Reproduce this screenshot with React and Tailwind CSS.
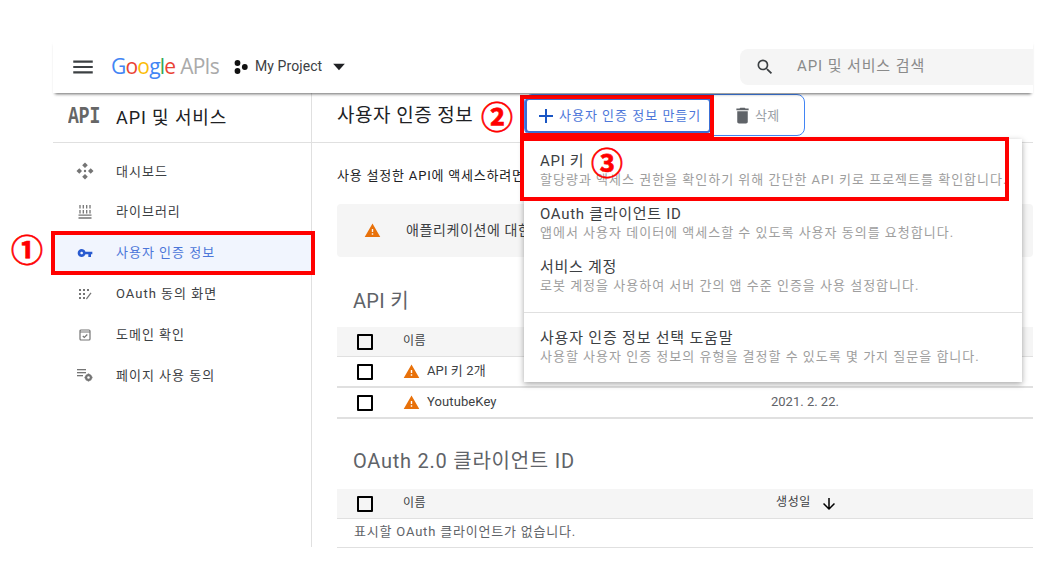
const FONT = "font-['Roboto','Noto_Sans_CJK_KR',sans-serif]";

function MaterialIcon({ d, className }) {
  return (
    <svg viewBox="0 0 24 24" fill="currentColor" className={className}>
      <path d={d} />
    </svg>
  );
}

const ICONS = {
  menu: 'M3 18h18v-2H3v2zm0-5h18v-2H3v2zm0-7v2h18V6H3z',
  search:
    'M15.5 14h-.79l-.28-.27A6.471 6.471 0 0 0 16 9.5 6.5 6.5 0 1 0 9.5 16c1.61 0 3.09-.59 4.23-1.57l.27.28v.79l5 4.99L20.49 19l-4.99-5zm-6 0C7.01 14 5 11.99 5 9.5S7.01 5 9.5 5 14 7.01 14 9.5 11.99 14 9.5 14z',
  key: 'M12.65 10C11.83 7.67 9.61 6 7 6c-3.31 0-6 2.69-6 6s2.69 6 6 6c2.61 0 4.83-1.67 5.65-4H17v4h4v-4h2v-4H12.65zM7 14c-1.1 0-2-.9-2-2s.9-2 2-2 2 .9 2 2-.9 2-2 2z',
  warning: 'M1 21h22L12 2 1 21zm12-3h-2v-2h2v2zm0-4h-2v-4h2v4z',
  trash: 'M6 19c0 1.1.9 2 2 2h8c1.1 0 2-.9 2-2V7H6v12zM19 4h-3.5l-1-1h-5l-1 1H5v2h14V4z',
  add: 'M19 13h-6v6h-2v-6H5v-2h6V5h2v6h6v2z',
  down: 'M20 12l-1.41-1.41L13 16.17V4h-2v12.17l-5.58-5.59L4 12l8 8 8-8z',
  caret: 'M5 8l7 8 7-8z',
};

function DashboardIcon() {
  return (
    <svg viewBox="0 0 18 18" fill="#757575" className="h-[18px] w-[18px]">
      <path d="M9 .5l2.8 2.8L9 6 6.2 3.3zM9 12l2.8 2.7L9 17.5l-2.8-2.8zM.5 9l2.8-2.8L6 9l-2.7 2.8zM12 9l2.7-2.8L17.5 9l-2.8 2.8z" />
      <circle cx="9" cy="9" r="1.2" />
    </svg>
  );
}

function LibraryIcon() {
  return (
    <svg viewBox="0 0 14 14" stroke="#757575" strokeWidth="1.3" className="h-[14px] w-[14px]">
      <path d="M2 0v3.4M5.3 0v3.4M8.7 0v3.4M12 0v3.4M2 5v3.4M5.3 5v3.4M8.7 5v3.4M12 5v3.4M.5 10.2h13M.5 13h13" />
    </svg>
  );
}

function ConsentIcon() {
  return (
    <svg viewBox="0 0 14 14" fill="#757575" className="h-[14px] w-[14px]">
      <rect x="1" y="2" width="2" height="2" />
      <rect x="5" y="2" width="2" height="2" />
      <rect x="9" y="2" width="2" height="2" />
      <rect x="1" y="6" width="2" height="2" />
      <rect x="5" y="6" width="2" height="2" />
      <rect x="1" y="10" width="2" height="2" />
      <rect x="5" y="10" width="2" height="2" />
      <path d="M8 11.5l4.5-6 1 .8-4.7 6.2z" />
    </svg>
  );
}

function DomainIcon() {
  return (
    <svg viewBox="0 0 14 14" fill="none" stroke="#757575" strokeWidth="1.2" className="h-[14px] w-[14px]">
      <rect x="2" y="2" width="10" height="10" rx="1" />
      <path d="M2 4h10M4.8 8l1.5 1.5 3-3" />
    </svg>
  );
}

function PageUsageIcon() {
  return (
    <svg viewBox="0 0 18 16" fill="#757575" className="h-[16px] w-[18px]">
      <rect x="1" y="2" width="9" height="1.3" />
      <rect x="1" y="5" width="9" height="1.3" />
      <rect x="1" y="8" width="6" height="1.3" />
      <circle cx="12.5" cy="10.5" r="2.4" fill="none" stroke="#757575" strokeWidth="2.2" />
      <path d="M11.8 6.5h1.4v1.4h-1.4zM11.8 13.1h1.4v1.4h-1.4zM8.5 9.8h1.4v1.4H8.5zM15.1 9.8h1.4v1.4h-1.4z" />
    </svg>
  );
}

const NAV_ITEMS = [
  { label: '대시보드', icon: <DashboardIcon /> },
  { label: '라이브러리', icon: <LibraryIcon /> },
  {
    label: '사용자 인증 정보',
    icon: <MaterialIcon d={ICONS.key} className="h-[16px] w-[16px] text-[#2a5bd0]" />,
    active: true,
  },
  { label: 'OAuth 동의 화면', icon: <ConsentIcon /> },
  { label: '도메인 확인', icon: <DomainIcon /> },
  { label: '페이지 사용 동의', icon: <PageUsageIcon /> },
];

const MENU_ITEMS = [
  { title: 'API 키', text: '할당량과 액세스 권한을 확인하기 위해 간단한 API 키로 프로젝트를 확인합니다.' },
  { title: 'OAuth 클라이언트 ID', text: '앱에서 사용자 데이터에 액세스할 수 있도록 사용자 동의를 요청합니다.' },
  { title: '서비스 계정', text: '로봇 계정을 사용하여 서버 간의 앱 수준 인증을 사용 설정합니다.' },
];

function Checkbox() {
  return <span className="block h-[16px] w-[16px] rounded-[1px] border-2 border-black" />;
}

function TableHead({ sorted }) {
  return (
    <div className="flex h-[30px] items-center border-b border-[#e0e0e0] bg-[#f5f5f5] pl-[20px] text-[12px] tracking-[0.5px] text-[#3c4043]">
      <Checkbox />
      <span className="mb-[2px] ml-[30px]">이름</span>
      {sorted && (
        <span className="ml-[350px] flex items-center gap-[9px]">
          <span className="mb-[3px]">생성일</span>
          <MaterialIcon d={ICONS.down} className="h-[18px] w-[18px] text-black" />
        </span>
      )}
    </div>
  );
}

function KeyRow({ name, date }) {
  return (
    <div className="flex h-[31px] items-center border-b-2 border-[#e0e0e0] pl-[20px] text-[13px] text-[#3c4043]">
      <Checkbox />
      <MaterialIcon d={ICONS.warning} className="ml-[30px] h-[17px] w-[17px] text-[#e8710a]" />
      <span className="mb-[2px] ml-[7px] w-[344px] tracking-[0.1px]">{name}</span>
      <span className="mb-[2px] text-[#5f6368]">{date}</span>
    </div>
  );
}

function Sidebar() {
  return (
    <aside className="w-[259px] shrink-0 border-r border-[#e0e0e0]">
      <div className="flex h-[50px] items-center border-b border-[#e0e0e0] pl-[15px]">
        <span className="w-[48px] origin-center scale-y-130 font-['Liberation_Mono',monospace] text-[18px] font-bold text-[#666]">
          API
        </span>
        <span className="text-[18px] tracking-[0.9px] text-[#202124]">API 및 서비스</span>
      </div>
      <nav className="pt-[8px]">
        {NAV_ITEMS.map((item) => (
          <div
            key={item.label}
            className={`flex h-[40.8px] items-center text-[13px] tracking-[1px] ${
              item.active ? 'bg-[#f1f5fe] text-[#4c76d9]' : 'text-[#3c4043]'
            }`}
          >
            <span className="flex w-[63px] justify-center">{item.icon}</span>
            {item.label}
          </div>
        ))}
      </nav>
    </aside>
  );
}

function Toolbar() {
  return (
    <div className="flex h-[50px] items-start border-b border-[#e0e0e0] pl-[25px]">
      <h1 className="mt-[10px] w-[187px] text-[19px] font-normal leading-[26px] tracking-[0.5px] text-[#202124]">
        사용자 인증 정보
      </h1>
      <div className="mt-[1px] flex h-[42px] w-[281px] items-start rounded-[8px] border border-[#4285f4]">
        <button className="mt-[3px] flex h-[35px] w-[186px] items-center rounded-[4px] border-2 border-[#3b6fd4] pl-[7px] pt-[1px] text-[13px] tracking-[1px] text-[#4c76d9]">
          <MaterialIcon d={ICONS.add} className="mr-[1px] h-[24px] w-[24px] text-[#1a56c4]" />
          사용자 인증 정보 만들기
        </button>
        <span className="ml-[21px] mt-[10px] flex items-center gap-[2px] text-[13px] tracking-[0.4px] text-[#9aa0a6]">
          <MaterialIcon d={ICONS.trash} className="h-[21px] w-[21px] text-[#5f6368]" />
          삭제
        </span>
      </div>
    </div>
  );
}

function CreateMenu() {
  return (
    <div className="absolute left-[524px] top-[139px] h-[243px] w-[498px] bg-white pt-[12px] shadow-[0_2px_6px_rgba(0,0,0,0.35)]">
      {MENU_ITEMS.map((item) => (
        <div key={item.title} className="h-[53px] pl-[16px]">
          <div className="text-[15px] leading-[20px] tracking-[0.7px] text-[#3c4043]">{item.title}</div>
          <div className="whitespace-nowrap text-[13px] leading-[18px] tracking-[1px] text-[#9e9e9e]">{item.text}</div>
        </div>
      ))}
      <div className="mt-[2px] border-t border-[#e0e0e0] pl-[16px] pt-[15px]">
        <div className="text-[15px] leading-[20px] tracking-[0.8px] text-[#3c4043]">사용자 인증 정보 선택 도움말</div>
        <div className="whitespace-nowrap text-[13px] leading-[18px] tracking-[1px] text-[#9e9e9e]">
          사용할 사용자 인증 정보의 유형을 결정할 수 있도록 몇 가지 질문을 합니다.
        </div>
      </div>
    </div>
  );
}

export default function App() {
  return (
    <div className={`relative h-[584px] w-[1052px] overflow-hidden bg-white pl-[53px] pt-[40px] ${FONT}`}>
      <div className="w-[980px]">
        <header className="relative z-10 flex h-[53px] items-center shadow-[0_3px_3px_-2px_rgba(0,0,0,0.6)]">
          <MaterialIcon d={ICONS.menu} className="ml-[17px] h-[26px] w-[26px] text-[#3c4043]" />
          <span className="ml-[15px] flex font-['Open_Sans',sans-serif] text-[21px] tracking-[-0.8px]">
            <span className="text-[#4285f4]">G</span>
            <span className="text-[#ea4335]">o</span>
            <span className="text-[#fbbc05]">o</span>
            <span className="text-[#4285f4]">g</span>
            <span className="text-[#34a853]">l</span>
            <span className="text-[#ea4335]">e</span>
            <span className="ml-[5px] text-[#aaa]">APIs</span>
          </span>
          <svg viewBox="0 0 14 14" fill="#111" className="ml-[15px] h-[14px] w-[14px]">
            <circle cx="3.5" cy="3" r="2.9" />
            <circle cx="3.5" cy="11" r="2.9" />
            <circle cx="10.8" cy="7" r="2.9" />
          </svg>
          <span className="ml-[7px] text-[14px] tracking-[0.1px] text-[#3c4043]">My Project</span>
          <MaterialIcon d={ICONS.caret} className="ml-[7px] h-[20px] w-[20px] text-[#202124]" />
          <div className="ml-auto flex h-[36px] w-[293px] items-center rounded-l-[8px] bg-[#f5f5f5] pl-[15px] text-[15px] tracking-[0.9px] text-[#8a8a8a]">
            <MaterialIcon d={ICONS.search} className="h-[20px] w-[20px] text-[#3c4043]" />
            <span className="ml-[22px]">API 및 서비스 검색</span>
          </div>
        </header>

        <div className="flex h-[454px]">
          <Sidebar />
          <main className="min-w-0 flex-1">
            <Toolbar />
            <div className="pl-[25px]">
              <p className="mt-[24px] whitespace-nowrap text-[13px] leading-[18px] tracking-[0.8px] text-[#202124]">
                사용 설정한 API에 액세스하려면 사용자 인증 정보가 필요합니다.
              </p>
              <div className="mt-[19px] flex h-[53px] items-center rounded-[4px] bg-[#f5f5f5] pl-[27px] text-[14px] tracking-[0.6px] text-[#3c4043]">
                <MaterialIcon d={ICONS.warning} className="h-[17px] w-[17px] text-[#e8710a]" />
                <span className="ml-[25px]">애플리케이션에 대한 API 키를 제한하세요.</span>
              </div>
              <h2 className="mt-[30px] pl-[16px] text-[20px] font-normal leading-[28px] tracking-[0.3px] text-[#5f6368]">
                API 키
              </h2>
              <div className="mt-[12px]">
                <TableHead />
                <KeyRow name="API 키 2개" date="" />
                <KeyRow name="YoutubeKey" date="2021. 2. 22." />
              </div>
              <h2 className="mt-[28px] pl-[16px] text-[20px] font-normal leading-[28px] tracking-[0.75px] text-[#5f6368]">
                OAuth 2.0 클라이언트 ID
              </h2>
              <div className="mt-[14px]">
                <TableHead sorted />
                <div className="flex h-[29px] items-center border-b border-[#e0e0e0] pb-[2px] pl-[17px] text-[13px] tracking-[0.8px] text-[#5f6368]">
                  표시할 OAuth 클라이언트가 없습니다.
                </div>
              </div>
            </div>
          </main>
        </div>
      </div>

      <CreateMenu />

      {/* red callouts drawn over the screenshot */}
      <div className="absolute left-[51px] top-[231px] h-[44px] w-[264px] border-4 border-[#ff0000]" />
      <div className="absolute left-[520px] top-[95px] h-[42px] w-[194px] border-4 border-[#ff0000]" />
      <div className="absolute left-[520px] top-[137px] h-[64px] w-[489px] border-4 border-[#ff0000]" />
      <span className="absolute left-[11px] top-[230px] text-[32px] font-bold leading-[42px] text-[#ff0000] [-webkit-text-stroke:0.6px_#ff0000]">①</span>
      <span className="absolute left-[481px] top-[97px] text-[32px] font-bold leading-[42px] text-[#ff0000] [-webkit-text-stroke:0.6px_#ff0000]">②</span>
      <span className="absolute left-[591px] top-[143px] text-[32px] font-bold leading-[42px] text-[#ff0000] [-webkit-text-stroke:0.6px_#ff0000]">③</span>
    </div>
  );
}
